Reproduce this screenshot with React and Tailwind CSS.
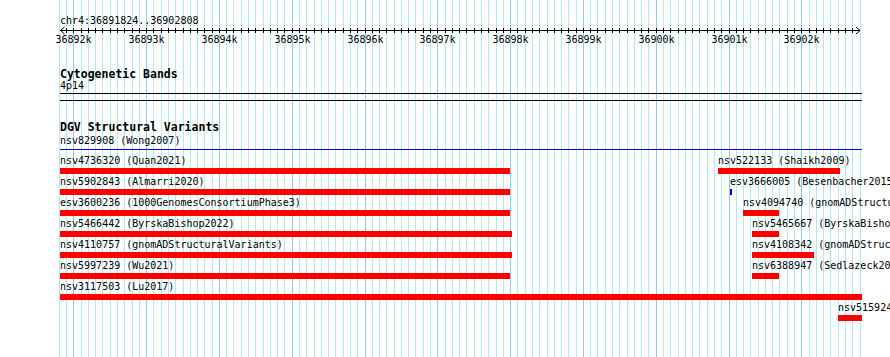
import React from "react";

// ruler / grid geometry, in page pixels
const X0 = 73.3; // 36892k
const STEP = 7.28; // 100 bp
const LEFT = 60;
const MONO = "font-['DejaVu_Sans_Mono','Liberation_Mono',monospace]";

const gridLines = [];
for (let k = -2; k <= 108; k++) {
  gridLines.push({ x: Math.round(X0 + k * STEP) + 0.5, major: k % 10 === 0 });
}

const ticks = [];
for (let k = -1; k <= 108; k++) {
  const x = X0 + k * STEP;
  if (x >= 61 && x <= 859) ticks.push({ x: Math.round(x) + 0.5 - LEFT, k });
}

const rows = [
  [
    { label: "nsv4736320 (Quan2021)", x: 60, x2: 510 },
    { label: "nsv522133 (Shaikh2009)", x: 718, x2: 840 },
  ],
  [
    { label: "nsv5902843 (Almarri2020)", x: 60, x2: 510 },
    { label: "esv3666005 (Besenbacher2015)", x: 730, x2: 732, blue: true },
  ],
  [
    { label: "esv3600236 (1000GenomesConsortiumPhase3)", x: 60, x2: 510 },
    { label: "nsv4094740 (gnomADStructuralVariants)", x: 743, x2: 779 },
  ],
  [
    { label: "nsv5466442 (ByrskaBishop2022)", x: 60, x2: 512 },
    { label: "nsv5465667 (ByrskaBishop2022)", x: 752, x2: 779 },
  ],
  [
    { label: "nsv4110757 (gnomADStructuralVariants)", x: 60, x2: 512 },
    { label: "nsv4108342 (gnomADStructuralVariants)", x: 752, x2: 814 },
  ],
  [
    { label: "nsv5997239 (Wu2021)", x: 60, x2: 510 },
    { label: "nsv6388947 (Sedlazeck2017)", x: 752, x2: 779 },
  ],
  [{ label: "nsv3117503 (Lu2017)", x: 60, x2: 862 }],
  [{ label: "nsv5159241 (Collins2017)", x: 838, x2: 862 }],
];

const Feature = ({ f }) => (
  <div className="absolute top-[5px]" style={{ left: f.x - LEFT }}>
    <div className="text-[10px] leading-[12px] whitespace-nowrap">{f.label}</div>
    <div
      className={f.blue ? "h-[6px] mt-px bg-[#0000ff]" : "h-[6px] mt-px bg-[#ff0000]"}
      style={{ width: f.x2 - f.x }}
    />
  </div>
);

const Ruler = () => (
  <svg width="802" height="20" className="block overflow-visible">
    <line x1="0.5" y1="3.5" x2="800" y2="3.5" stroke="#000" />
    <polyline points="4.5,0 0.5,3.5 4.5,7" fill="none" stroke="#000" />
    <polyline points="796,0 800,3.5 796,7" fill="none" stroke="#000" />
    {ticks.map((t) => (
      <line key={t.k} x1={t.x} y1="1" x2={t.x} y2="6" stroke="#000" />
    ))}
    {ticks
      .filter((t) => t.k % 10 === 0 && t.k >= 0)
      .map((t) => (
        <text
          key={"l" + t.k}
          x={t.x}
          y="16"
          textAnchor="middle"
          fontSize="10"
          fontFamily="DejaVu Sans Mono, Liberation Mono, monospace"
          fill="#000"
        >
          {36892 + t.k / 10}k
        </text>
      ))}
  </svg>
);

const App = () => {
  return (
    <div className={`relative w-[890px] h-[357px] overflow-hidden bg-white text-black ${MONO}`}>
      {/* background grid */}
      <svg width="890" height="357" className="absolute inset-0 pointer-events-none">
        {gridLines
          .filter((g) => !g.major)
          .map((g, i) => (
            <line key={i} x1={g.x} y1="0" x2={g.x} y2="357" stroke="#b0eaf0" />
          ))}
        {gridLines
          .filter((g) => g.major)
          .map((g, i) => (
            <line key={"m" + i} x1={g.x} y1="0" x2={g.x} y2="357" stroke="#8ccbe8" />
          ))}
      </svg>

      <div className="relative pl-[60px] pt-[15px]">
        <div className="w-[802px]">
          {/* location + ruler */}
          <div className="text-[10px] leading-[12px]">chr4:36891824..36902808</div>
          <Ruler />

          {/* Cytogenetic Bands track */}
          <div className="mt-[21px] text-[11.5px] leading-[12px] font-bold">Cytogenetic Bands</div>
          <div className="text-[10px] leading-[12px]">4p14</div>
          <div className="mt-px h-px bg-black" />
          <div className="mt-[6px] h-px bg-black" />

          {/* DGV track */}
          <div className="mt-[20px] text-[11.5px] leading-[12px] font-bold">DGV Structural Variants</div>
          <div className="mt-[2px] text-[10px] leading-[12px]">nsv829908 (Wong2007)</div>
          <div className="mt-[2px] h-px bg-[#0000ff]" />

          <div>
            {rows.map((row, i) => (
              <div key={i} className="relative h-[21px]">
                {row.map((f) => (
                  <Feature key={f.label} f={f} />
                ))}
              </div>
            ))}
          </div>
        </div>
      </div>
    </div>
  );
};

export default App;
